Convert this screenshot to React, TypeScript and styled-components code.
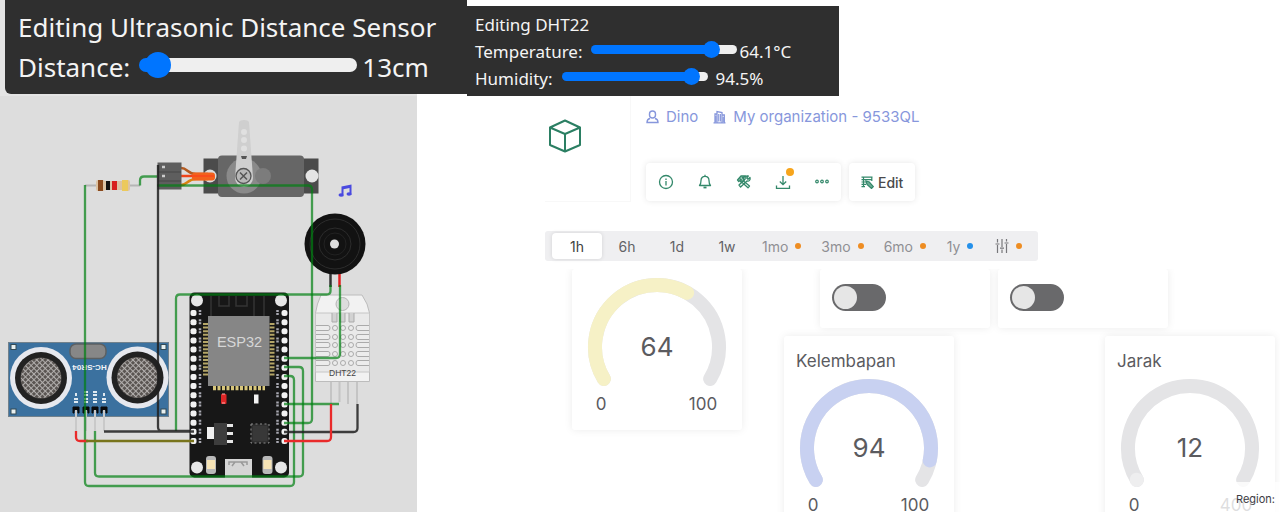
import React, { useState } from "react";
import styled, { createGlobalStyle, css } from "styled-components";

const GlobalStyle = createGlobalStyle`
  *, *::before, *::after { box-sizing: border-box; }
  body { margin: 0; background: #fff; }
  button, input { font: inherit; color: inherit; margin: 0; }
`;

const Page = styled.div`
  height: 100vh;
  display: flex;
  flex-direction: column;
  overflow: hidden;
  position: relative;
  font-family: Inter, "Liberation Sans", sans-serif;
  color: #5b5b5f;
`;

/* ---------- simulator property editors ---------- */

const Editors = styled.header`
  display: flex;
  align-items: flex-start;
  font-family: "Noto Sans", "Open Sans", sans-serif;
  color: #f4f4f4;
`;

const EditorSlot = styled.div`
  padding: 0 0 2px 5px;
  background: linear-gradient(90deg, #e4e4e4 417px, #fff 417px);
`;

const Editor = styled.form<{ $large?: boolean }>`
  background: #2f2f2f;
  ${(p) =>
    p.$large
      ? css`
          width: 462px;
          height: 94px;
          padding: 7px 13px;
          font-size: 26px;
          line-height: 40px;
          border-bottom-left-radius: 6px;
        `
      : css`
          width: 372px;
          height: 90px;
          margin-top: 6px;
          padding: 5px 8px;
          font-size: 17px;
          line-height: 27px;
        `}
`;

const EditorTitle = styled.div`
  white-space: nowrap;
`;

const EditorRow = styled.div<{ $gap: number }>`
  display: flex;
  align-items: center;
  white-space: nowrap;
  & > input {
    margin-left: 9px;
    margin-right: ${(p) => p.$gap}px;
  }
`;

const Range = styled.input<{ $w: number; $track: number; $thumb: number }>`
  appearance: none;
  width: ${(p) => p.$w}px;
  height: ${(p) => p.$thumb}px;
  margin-bottom: 5px;
  background: transparent;
  &::-webkit-slider-runnable-track {
    height: ${(p) => p.$track}px;
    border-radius: ${(p) => p.$track}px;
    background: linear-gradient(#0075ff, #0075ff) 0 0 / var(--fill) 100% no-repeat #efefef;
  }
  &::-webkit-slider-thumb {
    appearance: none;
    width: ${(p) => p.$thumb}px;
    height: ${(p) => p.$thumb}px;
    margin-top: ${(p) => (p.$track - p.$thumb) / 2}px;
    border-radius: 50%;
    background: #0075ff;
  }
`;

type SliderProps = {
  id: string;
  label: string;
  unit: string;
  min: number;
  max: number;
  step: number;
  initial: number;
  large?: boolean;
  valueGap: number;
};

function Slider({ id, label, unit, min, max, step, initial, large, valueGap }: SliderProps) {
  const [value, setValue] = useState(initial);
  const width = large ? 218 : 146;
  const thumb = large ? 26 : 17;
  const ratio = (value - min) / (max - min);
  return (
    <EditorRow $gap={valueGap}>
      <label htmlFor={id}>{label}</label>
      <Range
        id={id}
        type="range"
        min={min}
        max={max}
        step={step}
        value={value}
        onChange={(e) => setValue(Number(e.target.value))}
        $w={width}
        $track={large ? 14 : 9}
        $thumb={thumb}
        style={{ "--fill": `${thumb / 2 + (width - thumb) * ratio}px` } as React.CSSProperties}
      />
      <output htmlFor={id}>
        {value}
        {unit}
      </output>
    </EditorRow>
  );
}

/* ---------- circuit ---------- */

const Main = styled.main`
  flex: 1;
  min-height: 0;
  display: flex;
  align-items: stretch;
`;

const CircuitPane = styled.section`
  flex: none;
  width: 417px;
  background: #dddddd;
`;

const CircuitSvg = styled.svg`
  display: block;
  width: 100%;
`;

const PIN_ROWS = Array.from({ length: 15 }, (_, i) => 313 + i * 9.14);

function Transducer({ cx, cy }: { cx: number; cy: number }) {
  return (
    <g>
      <circle cx={cx} cy={cy} r="31" fill="#e6e8ee" />
      <circle cx={cx} cy={cy} r="26" fill="#222" />
      <circle cx={cx} cy={cy} r="20.500" fill="#5a5552" />
      <circle cx={cx} cy={cy} r="20" fill="url(#mesh)" />
    </g>
  );
}

function Circuit() {
  return (
    <CircuitSvg viewBox="0 96 417 416" role="img" aria-label="ESP32 circuit">
      <defs>
        <pattern id="mesh" width="4" height="4" patternUnits="userSpaceOnUse" patternTransform="rotate(45)">
          <path d="M0 0H4M0 0V4" stroke="#b5b2b0" strokeWidth="1.800" />
        </pattern>
      </defs>

      {/* servo */}
      <g>
        <rect x="203.500" y="158.500" width="115" height="35" fill="#4b4b4b" />
        <circle cx="210" cy="176" r="6.500" fill="#ddd" />
        <circle cx="312" cy="176" r="6.500" fill="#e4e4e4" />
        <rect x="218" y="155.500" width="86" height="41.500" rx="4" fill="#666" />
        <circle cx="244" cy="176" r="17.500" fill="#8a8a8a" />
        <circle cx="263" cy="176" r="8" fill="#7c7c7c" />
        <path d="M239 122q1-2 5-2t5 2l4 56a9 9 0 0 1-18 0z" fill="#cfcfcf" />
        <g fill="#e0e0e0">
          <circle cx="244" cy="132" r="3" />
          <circle cx="244" cy="140" r="3" />
          <circle cx="244" cy="148.500" r="3" />
        </g>
        <path d="M241 156h6l-1 3h-4z" fill="#555" />
        <circle cx="243.500" cy="176" r="7.500" fill="#b8b8b8" stroke="#555" strokeWidth="1.300" />
        <path d="M240 172.500l7 7M247 172.500l-7 7" stroke="#555" strokeWidth="1.500" />
        <g fill="none" strokeWidth="2.500">
          <path d="M181 168c7 0 6 6 15 6h12" stroke="#b35a20" />
          <path d="M181 185c7 0 6-6 15-6h12" stroke="#d98212" />
          <path d="M181 176h27" stroke="#f0441a" />
        </g>
        <rect x="192" y="172.500" width="23" height="8" rx="3" fill="#f2621c" />
        <path d="M192 176h22" stroke="#f94d1c" strokeWidth="2" />
        <rect x="157.500" y="162.500" width="24" height="27" fill="#5e5e5e" />
        <path d="M158 172h23M158 181h23" stroke="#474747" />
        <path d="M162 167h3M162 176h3" stroke="#ccc" strokeWidth="2.500" />
      </g>

      {/* resistor */}
      <g>
        <path d="M85 185.500h55" stroke="#b5b5b5" strokeWidth="2" />
        <path d="M96 182q0-2 2-2h5l2 1h18l2-1h3q2 0 2 2v7q0 2-2 2h-3l-2-1h-18l-2 1h-5q-2 0-2-2z" fill="#dcc3a4" />
        <rect x="98" y="180" width="5" height="11" fill="#8a4a1e" />
        <rect x="106" y="181" width="4" height="9" fill="#111" />
        <rect x="112" y="181" width="5" height="9" fill="#d8201c" />
        <rect x="122" y="180" width="6" height="11" fill="#ecc95c" />
      </g>

      {/* buzzer */}
      <g>
        <path d="M330.500 272v15" stroke="#333" strokeWidth="2.500" />
        <path d="M339.500 272v15" stroke="#e02020" strokeWidth="2.500" />
        <circle cx="335" cy="244" r="30.500" fill="#121212" />
        <g fill="none" stroke="#2c2c2c">
          <circle cx="335" cy="244" r="25" />
          <circle cx="335" cy="244" r="16" />
          <circle cx="335" cy="244" r="11" stroke="#222" />
        </g>
        <circle cx="334.500" cy="244" r="4.500" fill="#ddd" />
        <g fill="#4a4ae0">
          <path d="M341.500 186.500l10-2v10.500h-2v-7l-6 1.200v7h-2z" />
          <ellipse cx="341" cy="195" rx="2.500" ry="1.800" />
          <ellipse cx="349" cy="194" rx="2.500" ry="1.800" />
        </g>
      </g>

      {/* ultrasonic sensor */}
      <g>
        <rect x="8.500" y="342.500" width="160" height="74" fill="#3b719f" stroke="#71818c" />
        <g fill="#e8f0f0" stroke="#334a55" strokeWidth="1">
          <rect x="11" y="344.500" width="5" height="5" />
          <rect x="161" y="344.500" width="5" height="5" />
          <rect x="11" y="409" width="5" height="5" />
          <rect x="161" y="409" width="5" height="5" />
        </g>
        <Transducer cx={41} cy={378} />
        <Transducer cx={137.500} cy={377.500} />
        <rect x="70" y="344" width="36" height="14.500" rx="6" fill="#878787" stroke="#5d6062" strokeWidth="1.500" />
        <text x="89.500" y="364.500" transform="rotate(180 89.500 364.500)" textAnchor="middle" fontFamily="Liberation Sans, sans-serif" fontWeight="700" fontSize="8" fill="#f2f5f7">
          HC-SR04
        </text>
        <g stroke="#dfe9f0" strokeWidth="4" fill="none">
          <path d="M76 403v-5M86 403v-5M95 403v-5M104 403v-5" strokeDasharray="2 1" />
          <path d="M86 396v-6M95 396v-6" strokeDasharray="2 1" />
          <path d="M76 396v-3M104 396v-3" strokeWidth="2" />
        </g>
        {[76, 86, 95, 104].map((x) => (
          <g key={x}>
            <path d={`M${x - 3} 413v-6h6v6h-1v-3h-4v3z`} fill="#0b0b0b" stroke="#0b0b0b" />
            <path d={`M${x} 410v21`} stroke="#c9c9c9" strokeWidth="2" />
          </g>
        ))}
      </g>

      {/* humidity sensor */}
      <g>
        <path d="M331 382v23M339.500 382v20M348 382v22M357 382v22" stroke="#c4c4c4" strokeWidth="2" />
        <path d="M321 295h41l5 9 2.500 9v68.500h-54V313l2-9z" fill="#f2f2f2" stroke="#bcbcbc" />
        <path d="M315.500 313h54v59h-54z" fill="#e9e9e9" stroke="#c6c6c6" />
        <circle cx="342.500" cy="304" r="6.500" fill="#ddd" stroke="#b5b5b5" />
        <path d="M332 313v9h5v-9M340 313v9h5v-9M349 313v9h5v-9" fill="#d2d2d2" stroke="#ababab" />
        {[328, 337, 345, 354, 363].map((y) => (
          <g key={y} fill="#ececec" stroke="#aaa" strokeWidth="1">
            <path d={`M316 ${y - 2.5}h12q2 0 2 2.500t-2 2.500h-12M369 ${y - 2.5}h-11q-2 0-2 2.500t2 2.500h11`} />
            <circle cx="335" cy={y} r="2.500" />
            <circle cx="343" cy={y} r="2.500" />
            <circle cx="351" cy={y} r="2.500" />
          </g>
        ))}
        <text x="342.500" y="376" textAnchor="middle" fontFamily="Liberation Sans, sans-serif" fontSize="8.500" fill="#444">
          DHT22
        </text>
      </g>

      {/* micro-controller board */}
      <g>
        <rect x="189.500" y="292.500" width="99.500" height="185" rx="5" fill="#171717" />
        <path d="M211 316v-20M219 296v10h10v-10M236 296v10h11v-10M254 296v20M264 296v20" fill="none" stroke="#353535" strokeWidth="1.500" />
        <g fill="#e6e6e6">
          <circle cx="197" cy="300.500" r="6" />
          <circle cx="281" cy="300.500" r="6" />
          <circle cx="197" cy="467.500" r="6" />
          <circle cx="281" cy="467.500" r="6" />
        </g>
        {PIN_ROWS.map((y) => (
          <g key={y}>
            <rect x="190.500" y={y - 3} width="6" height="6" rx="2" fill="#f2f2f2" />
            <rect x="281.500" y={y - 3} width="6" height="6" rx="2.500" fill="#f2f2f2" />
            <path d={`M200 ${y - 3}v6M277.500 ${y - 3}v6`} stroke="#a9a9b2" strokeWidth="2.500" strokeDasharray="2 1" />
          </g>
        ))}
        <path d="M205.500 323v53M272 323v53" stroke="#b5a667" strokeWidth="5" strokeDasharray="2 1.600" />
        <path d="M213 388h52" stroke="#d8c77c" strokeWidth="4.500" strokeDasharray="3 1.500" />
        <rect x="208" y="316" width="61.500" height="70" fill="#868686" />
        <text x="239.500" y="347" textAnchor="middle" fontFamily="Liberation Sans, sans-serif" fontSize="14.500" fill="#d6d6d6">
          ESP32
        </text>
        <rect x="221" y="394" width="5.500" height="10" rx="1" fill="#dd2626" />
        <path d="M222 394h3M222 403h3" stroke="#ffaaaa" />
        <rect x="254" y="394.500" width="4.500" height="9" fill="#f3f3f3" />
        <rect x="207" y="427" width="7" height="12" fill="#f1f1f1" />
        <rect x="214" y="423" width="13" height="22" fill="#3d3d3d" />
        <path d="M227 425.500h6M227 433.500h6M227 441.500h6" stroke="#e6e6e6" strokeWidth="3" />
        <rect x="251" y="424" width="18" height="19" fill="#292929" stroke="#8e8e8e" strokeDasharray="2 2.500" />
        <rect x="252.500" y="425.500" width="15" height="16" fill="#383838" />
        <rect x="206" y="456" width="10" height="18" rx="3" fill="#b9b9b9" />
        <rect x="207" y="460" width="8" height="9" fill="#f6e3b5" />
        <rect x="262.500" y="456" width="10" height="18" rx="3" fill="#b9b9b9" />
        <rect x="263.500" y="460" width="8" height="9" fill="#f6e3b5" />
        <rect x="225" y="459" width="27" height="19" fill="#d5d5d5" />
        <path d="M229 465v-3h18v3M232 466l3-4M244 466l-3-4" fill="none" stroke="#999" strokeWidth="1.500" />
      </g>

      {/* wires */}
      <g fill="none" strokeWidth="2.300">
        <g stroke="#008011" strokeOpacity="0.700">
          <path d="M140 185.500v-5q0-4 4-4h13" />
          <path d="M157 185.500H308q4 0 4 4V419q0 4-4 4h-24" />
          <path d="M85 185v297q0 4 4 4h201q4 0 4-4V380q0-4-4-4h-6" />
          <path d="M95 431v42q0 3.500 4 3.500h200q4 0 4-4V371q0-4-4-4h-15" />
          <path d="M330.500 285v6q0 3.500-4 3.500H180q-4 0-4 4V431" />
          <path d="M340 285v69q0 4-4 4h-52" />
          <path d="M284 404h55" />
        </g>
        <g stroke="#202020" strokeOpacity="0.850">
          <path d="M158 165v262q0 4 4 4h28M104 431.500h90" />
          <path d="M357.500 404v24q0 4-4 4H284" />
        </g>
        <path d="M76 431v6q0 4 4 4h8M331 404v33q0 4-4 4h-43" stroke="#e92a2a" />
        <path d="M86 441h108" stroke="#78741c" />
      </g>
    </CircuitSvg>
  );
}

/* ---------- dashboard ---------- */

const Dashboard = styled.section`
  flex: 1;
  min-width: 0;
  margin-left: 128px;
  display: flex;
  flex-direction: column;
  overflow: hidden;
`;

const TopBar = styled.div`
  display: flex;
  gap: 15px;
  height: 106px;
  flex: none;
`;

const Brand = styled.div`
  width: 86px;
  padding: 23px 3px;
  border-right: 1px solid #f8f8f8;
  border-bottom: 1px solid #f8f8f8;
`;

const Account = styled.div`
  display: flex;
  flex-direction: column;
  gap: 36px;
  padding-top: 10px;
`;

const Crumbs = styled.nav`
  display: flex;
  gap: 15px;
  height: 21px;
  font-size: 15px;
  line-height: 21px;
`;

const Crumb = styled.a`
  display: flex;
  align-items: center;
  gap: 7px;
  color: #8797dc;
  text-decoration: none;
  white-space: nowrap;
`;

const Actions = styled.div`
  display: flex;
  gap: 8px;
`;

const surface = css`
  background: #fff;
  border-radius: 4px;
  box-shadow: 0 0 6px rgba(0, 0, 0, 0.1);
`;

const ActionGroup = styled.div`
  ${surface}
  display: flex;
  height: 38px;
`;

const IconButton = styled.button`
  position: relative;
  display: grid;
  place-items: center;
  width: 39px;
  padding: 0;
  border: 0;
  background: none;
`;

const Badge = styled.span`
  position: absolute;
  top: 5px;
  right: 8px;
  width: 8px;
  height: 8px;
  border-radius: 50%;
  background: #f7a51c;
`;

const EditButton = styled.button`
  ${surface}
  display: flex;
  align-items: center;
  gap: 4px;
  height: 38px;
  padding: 0 12px;
  border: 0;
  font-size: 14px;
  font-weight: 500;
  color: #4a4a4c;
`;

const Periods = styled.div`
  display: flex;
  align-self: flex-start;
  flex: none;
  height: 30px;
  margin-top: 29px;
  padding: 2px 6px 2px 7px;
  border-radius: 3px;
  background: #efeff1;
`;

const Period = styled.button<{ $active?: boolean; $locked?: boolean }>`
  display: flex;
  align-items: center;
  justify-content: center;
  gap: 7px;
  min-width: ${(p) => (p.$locked ? 48 : 50)}px;
  padding: 0 10px;
  border: 0;
  border-radius: 4px;
  font-size: 14px;
  background: ${(p) => (p.$active ? "#fff" : "transparent")};
  box-shadow: ${(p) => (p.$active ? "0 0 4px rgba(0, 0, 0, 0.12)" : "none")};
  color: ${(p) => (p.$active ? "#3f3f42" : p.$locked ? "#8f8f94" : "#626266")};
`;

const Dot = styled.span<{ $color: string }>`
  width: 6px;
  height: 6px;
  border-radius: 50%;
  background: ${(p) => p.$color};
`;

const Board = styled.div`
  flex: 1;
  min-height: 0;
  margin-top: 8px;
  padding: 0 5px 0 27px;
  display: flex;
  align-items: flex-start;
  gap: 42px;
  overflow: hidden;
`;

const BoardColumn = styled.div`
  flex: 1;
  display: flex;
  flex-direction: column;
  gap: 8px;
`;

const SwitchRow = styled.div`
  display: flex;
  gap: 8px;
  padding-left: 36px;
`;

const GaugeRow = styled.div`
  display: flex;
  justify-content: space-between;
`;

const Card = styled.article`
  flex: none;
  width: 170px;
  background: #fff;
  border-radius: 3px;
  box-shadow: 0 0 9px rgba(0, 0, 0, 0.08);
`;

const GaugeCard = styled(Card)`
  display: flex;
  flex-direction: column;
  padding: 8px 12px 16px;
`;

const CardTitle = styled.h2`
  margin: 5px 0 5px;
  font-size: 17px;
  line-height: 24px;
  font-weight: 400;
`;

const GaugeSvg = styled.svg`
  align-self: center;
  width: 140px;
  height: 112px;
`;

const Limits = styled.div`
  display: grid;
  grid-template-columns: 34px 34px;
  justify-content: space-between;
  padding: 5px 10px 0 0;
  text-align: center;
  font-size: 17px;
  line-height: 20px;
`;

const SwitchCard = styled(Card)`
  height: 59px;
  padding: 15px 12px;
`;

const Toggle = styled.input`
  appearance: none;
  display: block;
  width: 54px;
  height: 27px;
  padding: 2px;
  border-radius: 14px;
  background: #69696b;
  &::before {
    content: "";
    display: block;
    width: 23px;
    height: 23px;
    border-radius: 50%;
    background: #e6e6e6;
  }
  &:checked::before {
    margin-left: auto;
  }
`;

const RegionNote = styled.footer`
  position: absolute;
  right: 0;
  bottom: 0;
  padding: 9px 5px 5px 18px;
  background: rgba(255, 255, 255, 0.8);
  font-size: 11px;
  line-height: 16px;
  color: #3d3d44;
`;

const R = 62;
const polar = (deg: number) => {
  const a = (deg * Math.PI) / 180;
  return `${(70 + R * Math.cos(a)).toFixed(2)} ${(70 + R * Math.sin(a)).toFixed(2)}`;
};
const arc = (ratio: number) =>
  `M${polar(149)}A${R} ${R} 0 ${ratio * 242 > 180 ? 1 : 0} 1 ${polar(149 + 242 * ratio)}`;

type GaugeProps = { title?: string; value: number; max: number; color: string };

function Gauge({ title, value, max, color }: GaugeProps) {
  return (
    <GaugeCard>
      {title && <CardTitle>{title}</CardTitle>}
      <GaugeSvg viewBox="0 0 140 112">
        <g fill="none" strokeWidth="14" strokeLinecap="round">
          <path d={arc(1)} stroke="#e4e4e6" />
          <path d={arc(value / max < 0.1 ? 0.001 : value / max - 0.02)} stroke={color} />
        </g>
        <text x="70" y="79" textAnchor="middle" fontSize="26" fill="#5b5b5f">
          {value}
        </text>
      </GaugeSvg>
      <Limits>
        <span>0</span>
        <span>{max}</span>
      </Limits>
    </GaugeCard>
  );
}

const GREEN = "#33886a";

const CubeIcon = () => (
  <svg width="34" height="34" viewBox="0 0 34 34" fill="none" stroke="#2b7f63" strokeWidth="2" strokeLinejoin="round">
    <path d="M17 1.500L32 8.500V26L17 32.500L2 26V8.500zM2 8.500L17 15L32 8.500M17 15V32.500" />
  </svg>
);

const UserIcon = () => (
  <svg width="13" height="14" viewBox="0 0 13 14" fill="none" stroke="#8797dc" strokeWidth="1.400">
    <rect x="3.500" y="1" width="6" height="7" rx="3" />
    <path d="M4 8.500C1.500 9 1 10.500 1 12.500H12C12 10.500 11.500 9 9 8.500" />
  </svg>
);

const BuildingIcon = () => (
  <svg width="13" height="14" viewBox="0 0 13 14" fill="none" stroke="#8797dc" strokeWidth="1.300">
    <path d="M.5 12.800H12.500M2 12.500V4H4M4 12.500V1.500L9 2.500V12.500M9 5H11.300V12.500" />
    <path d="M5.700 4V11.500M7.400 4V11.500" strokeWidth="1.100" />
    <path d="M2.800 6v6M10.200 7v5" />
  </svg>
);

const InfoIcon = () => (
  <svg width="16" height="16" viewBox="0 0 16 16" fill="none" stroke={GREEN} strokeWidth="1.300">
    <circle cx="8" cy="8" r="6.500" />
    <path d="M8 7V11.500M8 4.500V6" />
  </svg>
);

const BellIcon = () => (
  <svg width="16" height="16" viewBox="0 0 16 16" fill="none" stroke={GREEN} strokeWidth="1.300" strokeLinejoin="round">
    <path d="M2.500 11.500C4 10 4 9 4 6.500C4 4 5.500 2.300 8 2.300S12 4 12 6.500C12 9 12 10 13.500 11.500zM8 2.300V.8" />
    <path d="M6.500 13.500H9.500" strokeWidth="1.800" />
  </svg>
);

const ToolsIcon = () => (
  <svg width="16" height="16" viewBox="0 0 16 16" fill="none" stroke={GREEN} strokeWidth="1.300" strokeLinejoin="round">
    <path d="M1.500 6L5 2H9.500L7 4L8.200 6L5.500 8.500L4 6.500L2.800 7.500z" fill="#a5cdbf" />
    <path d="M7.500 7L13.500 12L12 13.800L6.200 8.500" />
    <path d="M14 3.500L12 5.300L10.700 4L12.300 2C9.800 1.500 8.700 3.200 9.200 5L3 11L4.600 13L11 7C13 7.500 14.700 6 14 3.500z" />
    <path d="M3.500 4.500L6 6.500M6 3L8 5" />
  </svg>
);

const DownloadIcon = () => (
  <svg width="16" height="16" viewBox="0 0 16 16" fill="none" stroke={GREEN} strokeWidth="1.300">
    <path d="M8 2V10.500M4.800 7.500L8 10.700L11.200 7.500M1.500 11.500V14.300H14.500V11.500" />
  </svg>
);

const MoreIcon = () => (
  <svg width="16" height="16" viewBox="0 0 16 16" fill="none" stroke={GREEN} strokeWidth="1.200">
    <circle cx="3" cy="7.500" r="1.300" />
    <circle cx="8" cy="7.500" r="1.300" />
    <circle cx="13" cy="7.500" r="1.300" />
  </svg>
);

const EditIcon = () => (
  <svg width="13" height="13" viewBox="0 0 13 13" fill="none" stroke={GREEN} strokeWidth="1.200">
    <path d="M.5 1.200H11.500M.5 3.600H11M.5 6H6M.5 8.400H5M.5 10.700H4M2.500 1V11M10.800 1V5" />
    <path d="M5 5L6 8.500L10.500 12.500L12.300 10.700L8.300 6z" fill="#6cab94" />
  </svg>
);

const AdjustIcon = () => (
  <svg width="14" height="14" viewBox="0 0 14 14" fill="none" stroke="#77777b" strokeWidth="1.200">
    <path d="M2.500 0V3.500M2.500 6V14M.5 5H4.500M7 0V8M7 10.500V14M5 9.200H9M11.500 0V2.500M11.500 5V14M9.500 4H13.500" />
  </svg>
);

const ORANGE = "#ee8d22";
const PERIODS = [
  { name: "1h", active: true },
  { name: "6h" },
  { name: "1d" },
  { name: "1w" },
  { name: "1mo", dot: ORANGE },
  { name: "3mo", dot: ORANGE },
  { name: "6mo", dot: ORANGE },
  { name: "1y", dot: "#2490ea" },
];

export default function App() {
  return (
    <Page>
      <GlobalStyle />
      <Editors>
        <EditorSlot>
          <Editor $large>
            <EditorTitle>Editing Ultrasonic Distance Sensor</EditorTitle>
            <Slider id="distance" label="Distance:" unit="cm" min={2} max={400} step={1} initial={13} large valueGap={5} />
          </Editor>
        </EditorSlot>
        <Editor>
          <EditorTitle>Editing DHT22</EditorTitle>
          <Slider id="temperature" label="Temperature:" unit="°C" min={-40} max={80} step={0.1} initial={64.1} valueGap={2} />
          <Slider id="humidity" label="Humidity:" unit="%" min={0} max={100} step={0.1} initial={94.5} valueGap={8} />
        </Editor>
      </Editors>
      <Main>
        <CircuitPane>
          <Circuit />
        </CircuitPane>
        <Dashboard>
          <TopBar>
            <Brand>
              <CubeIcon />
            </Brand>
            <Account>
              <Crumbs>
                <Crumb href="#user">
                  <UserIcon />
                  Dino
                </Crumb>
                <Crumb href="#organization">
                  <BuildingIcon />
                  My organization - 9533QL
                </Crumb>
              </Crumbs>
              <Actions>
                <ActionGroup>
                  <IconButton aria-label="Info"><InfoIcon /></IconButton>
                  <IconButton aria-label="Alerts"><BellIcon /></IconButton>
                  <IconButton aria-label="Tools"><ToolsIcon /></IconButton>
                  <IconButton aria-label="Download">
                    <DownloadIcon />
                    <Badge />
                  </IconButton>
                  <IconButton aria-label="More"><MoreIcon /></IconButton>
                </ActionGroup>
                <EditButton>
                  <EditIcon />
                  Edit
                </EditButton>
              </Actions>
            </Account>
          </TopBar>
          <Periods>
            {PERIODS.map((p) => (
              <Period key={p.name} $active={p.active} $locked={!!p.dot}>
                {p.name}
                {p.dot && <Dot $color={p.dot} />}
              </Period>
            ))}
            <Period $locked aria-label="Custom range">
              <AdjustIcon />
              <Dot $color={ORANGE} />
            </Period>
          </Periods>
          <Board>
            <Gauge value={64} max={100} color="#f6f1c6" />
            <BoardColumn>
              <SwitchRow>
                <SwitchCard><Toggle type="checkbox" role="switch" aria-label="Switch 1" /></SwitchCard>
                <SwitchCard><Toggle type="checkbox" role="switch" aria-label="Switch 2" /></SwitchCard>
              </SwitchRow>
              <GaugeRow>
                <Gauge title="Kelembapan" value={94} max={100} color="#c8d1f1" />
                <Gauge title="Jarak" value={12} max={400} color="#eeeeef" />
              </GaugeRow>
            </BoardColumn>
          </Board>
        </Dashboard>
      </Main>
      <RegionNote>Region:</RegionNote>
    </Page>
  );
}
